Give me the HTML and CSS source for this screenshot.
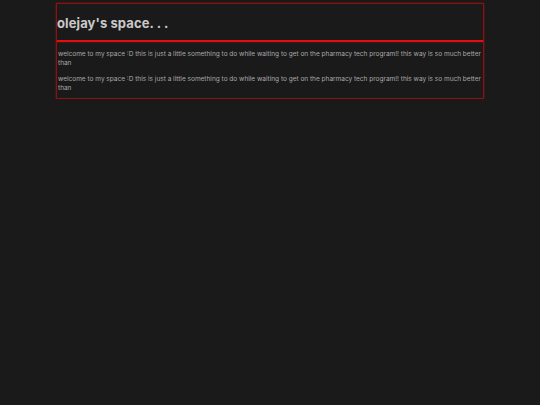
FILE: index.html
```html
<!DOCTYPE html>
<html>
<head>
<meta charset="utf-8">
<link rel="stylesheet" href="styles.css">
</head>
<body>
<div class="page">
  <header class="header">
    <h1 class="title">olejay's space. . .</h1>
  </header>
  <main class="content">
    <p class="text">welcome to my space :D this is just a little something to do while waiting to get on the pharmacy tech program!! this way is so much better than</p>
    <p class="text">welcome to my space :D this is just a little something to do while waiting to get on the pharmacy tech program!! this way is so much better than</p>
  </main>
</div>
</body>
</html>
```
FILE: styles.css
```css
html, body {
  margin: 0;
  padding: 0;
  background: #1a1a1a;
}
body {
  font-family: Inter, "Noto Sans", sans-serif;
  color: #b4b4b4;
}
.page {
  width: 428px;
  margin: 3px auto 0;
}
.header {
  border: 1px solid #8e1010;
  border-bottom: 2px solid #e01010;
  box-shadow: 0 0 2px rgba(220, 20, 20, 0.5);
  height: 35px;
  display: flex;
  align-items: center;
  padding-top: 1px;
  box-sizing: content-box;
}
.title {
  margin: 0;
  font-size: 13px;
  font-weight: 700;
  color: #c9c9c9;
  letter-spacing: 0.1px;
}
.content {
  border: 1px solid #8e1010;
  border-top: none;
  box-shadow: 0 0 2px rgba(220, 20, 20, 0.5);
  padding: 2px 1px 0;
  margin-top: -1px;
}
.text {
  margin: 7px 0 5px;
  font-size: 6.5px;
  line-height: 9px;
  color: #a9a9a9;
}
```
